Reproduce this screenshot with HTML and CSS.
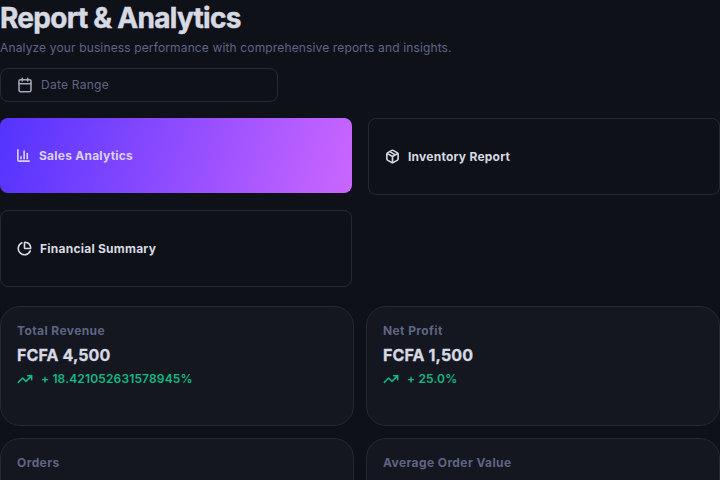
FILE: index.html
```html
<!DOCTYPE html>
<html lang="en">
<head>
<meta charset="utf-8">
<title>Report &amp; Analytics</title>
<link rel="stylesheet" href="styles.css">
</head>
<body>
<main class="page">
  <header class="header">
    <h1 class="title">Report &amp; Analytics</h1>
    <p class="subtitle">Analyze your business performance with comprehensive reports and insights.</p>
  </header>
  <button class="date-range">
    <svg class="icon" viewBox="0 0 24 24"><path d="M8 2v4M16 2v4M3 10h18"/><rect x="3" y="4" width="18" height="18" rx="2"/></svg>
    <span>Date Range</span>
  </button>
  <nav class="tabs">
    <a class="tab tab-active">
      <svg class="icon" viewBox="0 0 24 24"><path d="M3 3v16a2 2 0 0 0 2 2h16M18 17V9M13 17V5M8 17v-3"/></svg>
      <span>Sales Analytics</span>
    </a>
    <a class="tab">
      <svg class="icon" viewBox="0 0 24 24"><path d="M11 21.73a2 2 0 0 0 2 0l7-4A2 2 0 0 0 21 16V8a2 2 0 0 0-1-1.73l-7-4a2 2 0 0 0-2 0l-7 4A2 2 0 0 0 3 8v8a2 2 0 0 0 1 1.73zM12 22V12M3.3 7 12 12l8.7-5M7.5 4.27l9 5.15"/></svg>
      <span>Inventory Report</span>
    </a>
    <a class="tab">
      <svg class="icon" viewBox="0 0 24 24"><path d="M21 12c.552 0 1.005-.449.95-.998a10 10 0 0 0-8.953-8.951c-.55-.055-.998.398-.998.95v8a1 1 0 0 0 1 1zM21.21 15.89A10 10 0 1 1 8 2.83"/></svg>
      <span>Financial Summary</span>
    </a>
  </nav>
  <section class="stats">
    <article class="card">
      <h2 class="label">Total Revenue</h2>
      <p class="value">FCFA 4,500</p>
      <p class="trend"><svg class="icon" viewBox="0 0 24 24"><path d="m22 7-8.500 8.500-5-5L2 17M16 7h6v6"/></svg><span>+ 18.421052631578945%</span></p>
    </article>
    <article class="card">
      <h2 class="label">Net Profit</h2>
      <p class="value">FCFA 1,500</p>
      <p class="trend"><svg class="icon" viewBox="0 0 24 24"><path d="m22 7-8.500 8.500-5-5L2 17M16 7h6v6"/></svg><span>+ 25.0%</span></p>
    </article>
    <article class="card"><h2 class="label">Orders</h2></article>
    <article class="card"><h2 class="label">Average Order Value</h2></article>
  </section>
</main>
</body>
</html>
```
FILE: styles.css
```css
* { box-sizing: border-box; margin: 0; padding: 0; }
body {
  background: #0f1119;
  color: #d7d9e2;
  font-family: Inter, "Liberation Sans", sans-serif;
  font-size: 12px;
}
.page { display: flex; flex-direction: column; width: 720px; height: 480px; overflow: hidden; }
.icon {
  flex: none;
  width: 16px;
  height: 16px;
  fill: none;
  stroke: currentColor;
  stroke-width: 2.300;
  stroke-linecap: round;
  stroke-linejoin: round;
}
.header { flex: none; height: 68px; }
.title {
  font-size: 28px;
  line-height: 36px;
  font-weight: 700;
  letter-spacing: -.72px;
  white-space: nowrap;
  -webkit-text-stroke: .5px currentColor;
}
.subtitle { margin-top: 4px; line-height: 16px; color: #5f6584; letter-spacing: .14px; white-space: nowrap; }
.date-range {
  display: flex;
  flex: none;
  align-items: center;
  gap: 8px;
  width: 278px;
  height: 34px;
  padding: 0 16px 1px;
  border: 1px solid #262835;
  border-radius: 8px;
  background: transparent;
  color: #5f6584;
  font: inherit;
  letter-spacing: .25px;
}
.date-range .icon { color: #a5a9b8; }
.tabs {
  display: grid;
  flex: none;
  grid-template-columns: 352px 352px;
  grid-template-rows: 77px 77px;
  gap: 15px 16px;
  align-items: start;
  margin-top: 16px;
}
.tab {
  display: flex;
  align-items: center;
  gap: 8px;
  height: 77px;
  padding: 0 16px;
  border: 1px solid #262835;
  border-radius: 8px;
  font-weight: 700;
  letter-spacing: .24px;
}
.tab .icon { width: 15px; height: 15px; stroke-width: 2.600; }
.tab-active {
  height: 75px;
  border: 0;
  color: #d9d2f4;
  background: linear-gradient(105deg, #5433ff, #cb66ff);
}
.stats {
  display: grid;
  flex: none;
  grid-template-columns: 354px 354px;
  grid-auto-rows: 120px;
  gap: 12px;
  margin-top: 19px;
}
.card { padding: 16px; border: 1px solid #262835; border-radius: 20px; background: #141620; }
.label { color: #5f6584; font-size: 12px; line-height: 16px; font-weight: 700; letter-spacing: .4px; }
.value { margin-top: 6px; font-size: 16px; line-height: 20px; font-weight: 700; letter-spacing: .12px; -webkit-text-stroke: .3px currentColor; }
.trend { display: flex; align-items: center; gap: 8px; margin-top: 6px; line-height: 16px; color: #10b981; font-weight: 600; letter-spacing: .15px; }
```
